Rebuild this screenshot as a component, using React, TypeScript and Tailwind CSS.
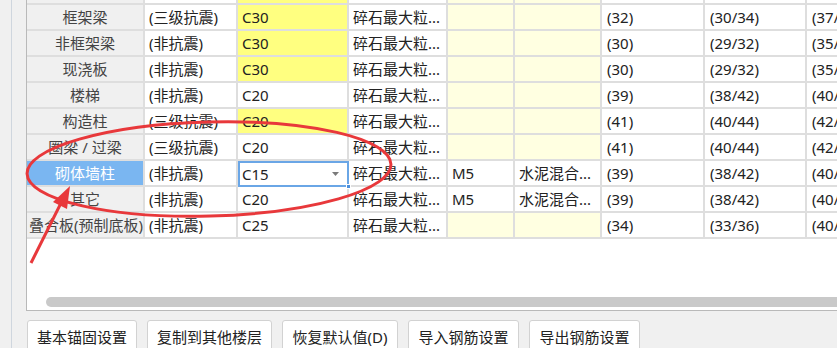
import React from "react";

type Row = {
  name: string;
  seismic: string;
  grade: string;
  gradeHot?: boolean;
  agg: string;
  mortar?: string;
  mortarType?: string;
  c7: string;
  c8: string;
  c9: string;
  selected?: boolean;
  leftName?: boolean;
};

const ROWS: Row[] = [
  { name: "剪力墙", seismic: "(三级抗震)", grade: "C30", gradeHot: true, agg: "碎石最大粒...", c7: "(32)", c8: "(30/34)", c9: "(37/41)" },
  { name: "框架梁", seismic: "(三级抗震)", grade: "C30", gradeHot: true, agg: "碎石最大粒...", c7: "(32)", c8: "(30/34)", c9: "(37/41)" },
  { name: "非框架梁", seismic: "(非抗震)", grade: "C30", gradeHot: true, agg: "碎石最大粒...", c7: "(30)", c8: "(29/32)", c9: "(35/39)" },
  { name: "现浇板", seismic: "(非抗震)", grade: "C30", gradeHot: true, agg: "碎石最大粒...", c7: "(30)", c8: "(29/32)", c9: "(35/39)" },
  { name: "楼梯", seismic: "(非抗震)", grade: "C20", agg: "碎石最大粒...", c7: "(39)", c8: "(38/42)", c9: "(40/44)" },
  { name: "构造柱", seismic: "(三级抗震)", grade: "C20", gradeHot: true, agg: "碎石最大粒...", c7: "(41)", c8: "(40/44)", c9: "(42/46)" },
  { name: "圈梁 / 过梁", seismic: "(三级抗震)", grade: "C20", agg: "碎石最大粒...", c7: "(41)", c8: "(40/44)", c9: "(42/46)" },
  { name: "砌体墙柱", seismic: "(非抗震)", grade: "C15", agg: "碎石最大粒...", mortar: "M5", mortarType: "水泥混合...", c7: "(39)", c8: "(38/42)", c9: "(40/44)", selected: true },
  { name: "其它", seismic: "(非抗震)", grade: "C20", agg: "碎石最大粒...", mortar: "M5", mortarType: "水泥混合...", c7: "(39)", c8: "(38/42)", c9: "(40/44)" },
  { name: "叠合板(预制底板)", seismic: "(非抗震)", grade: "C25", agg: "碎石最大粒...", c7: "(34)", c8: "(33/36)", c9: "(40/44)", leftName: true },
];

const BUTTONS = [
  { label: "基本锚固设置", w: "w-[110px]" },
  { label: "复制到其他楼层", w: "w-[125px]" },
  { label: "恢复默认值(D)", w: "w-[116px]" },
  { label: "导入钢筋设置", w: "w-[111px]" },
  { label: "导出钢筋设置", w: "w-[111px]" },
];

const cell = "h-[26px] flex items-center border-r-2 border-b-2 border-[#dedede] overflow-hidden whitespace-nowrap";

function GridRow({ row }: { row: Row }) {
  const lite = row.mortar ? "bg-white" : "bg-[#ffffe1]";
  return (
    <>
      <div
        className={`${cell} ${row.leftName ? "justify-start pl-[2px]" : "justify-center"} ${
          row.selected ? "bg-[#7ab6f1] text-white" : "bg-[#f0f0f0] text-[#444]"
        }`}
      >
        {row.name}
      </div>
      <div className={`${cell} bg-white pl-[4px]`}>{row.seismic}</div>
      {row.selected ? (
        <div className="relative h-[26px] flex items-center border-2 border-[#6aa6e6] bg-white pl-[2px] pr-[8px] justify-between">
          <span>{row.grade}</span>
          <svg width="7" height="4" viewBox="0 0 7 4">
            <polygon points="0,0 7,0 3.5,4" fill="#7a7a7a" />
          </svg>
          <span className="absolute -right-[4px] -bottom-[4px] w-[5px] h-[5px] bg-[#4b8fdc] border border-white" />
        </div>
      ) : (
        <div className={`${cell} pl-[4px] ${row.gradeHot ? "bg-[#ffff80]" : "bg-white"}`}>{row.grade}</div>
      )}
      <div className={`${cell} bg-white pl-[4px]`}>{row.agg}</div>
      <div className={`${cell} ${lite} pl-[4px]`}>{row.mortar ?? ""}</div>
      <div className={`${cell} ${lite} pl-[4px]`}>{row.mortarType ?? ""}</div>
      <div className={`${cell} bg-white pl-[5px]`}>{row.c7}</div>
      <div className={`${cell} bg-white pl-[5px]`}>{row.c8}</div>
      <div className={`${cell} bg-white pl-[5px]`}>{row.c9}</div>
    </>
  );
}

export default function App() {
  return (
    <div
      className="relative w-[837px] h-[348px] overflow-hidden bg-[#f0f0f0] flex text-[15px] text-[#222]"
      style={{ fontFamily: '"Noto Sans", "Noto Sans CJK SC", sans-serif' }}
    >
      {/* left gutter */}
      <div className="w-[12px] shrink-0 border-r border-[#cfd6de]" />

      <div className="flex-1 flex flex-col pl-[14px] min-w-0">
        {/* grid panel */}
        <div className="h-[311px] shrink-0 bg-white border-l border-b border-[#b9b9b9] flex flex-col overflow-hidden">
          <div className="overflow-hidden">
            <div className="-mt-[21px] grid grid-cols-[118px_93px_111px_99px_67px_87px_103px_102px_100px]">
              {ROWS.map((r, i) => (
                <GridRow key={i} row={r} />
              ))}
            </div>
          </div>
          <div className="mt-auto mb-[3px] ml-[19px] -mr-[20px] h-[10px] rounded-full bg-[#c9c9c9]" />
        </div>

        {/* buttons */}
        <div className="mt-[9px] ml-[1px] flex gap-[10px]">
          {BUTTONS.map((b) => (
            <button
              key={b.label}
              className={`${b.w} h-[34px] shrink-0 bg-white border border-[#d2d2d2] rounded-[3px] text-[15px] text-[#222] flex items-center justify-center`}
            >
              {b.label}
            </button>
          ))}
        </div>
      </div>

      {/* red annotation */}
      <svg className="absolute inset-0 pointer-events-none" width="837" height="348" viewBox="0 0 837 348">
        <ellipse
          cx="209"
          cy="169"
          rx="182"
          ry="47"
          transform="rotate(-1.5 209 169)"
          fill="none"
          stroke="#e8383b"
          strokeWidth="3"
        />
        <line x1="31" y1="263" x2="62" y2="201" stroke="#e8383b" strokeWidth="3" />
        <polygon points="70,186 67,209 53,202" fill="#e8383b" />
      </svg>
    </div>
  );
}
